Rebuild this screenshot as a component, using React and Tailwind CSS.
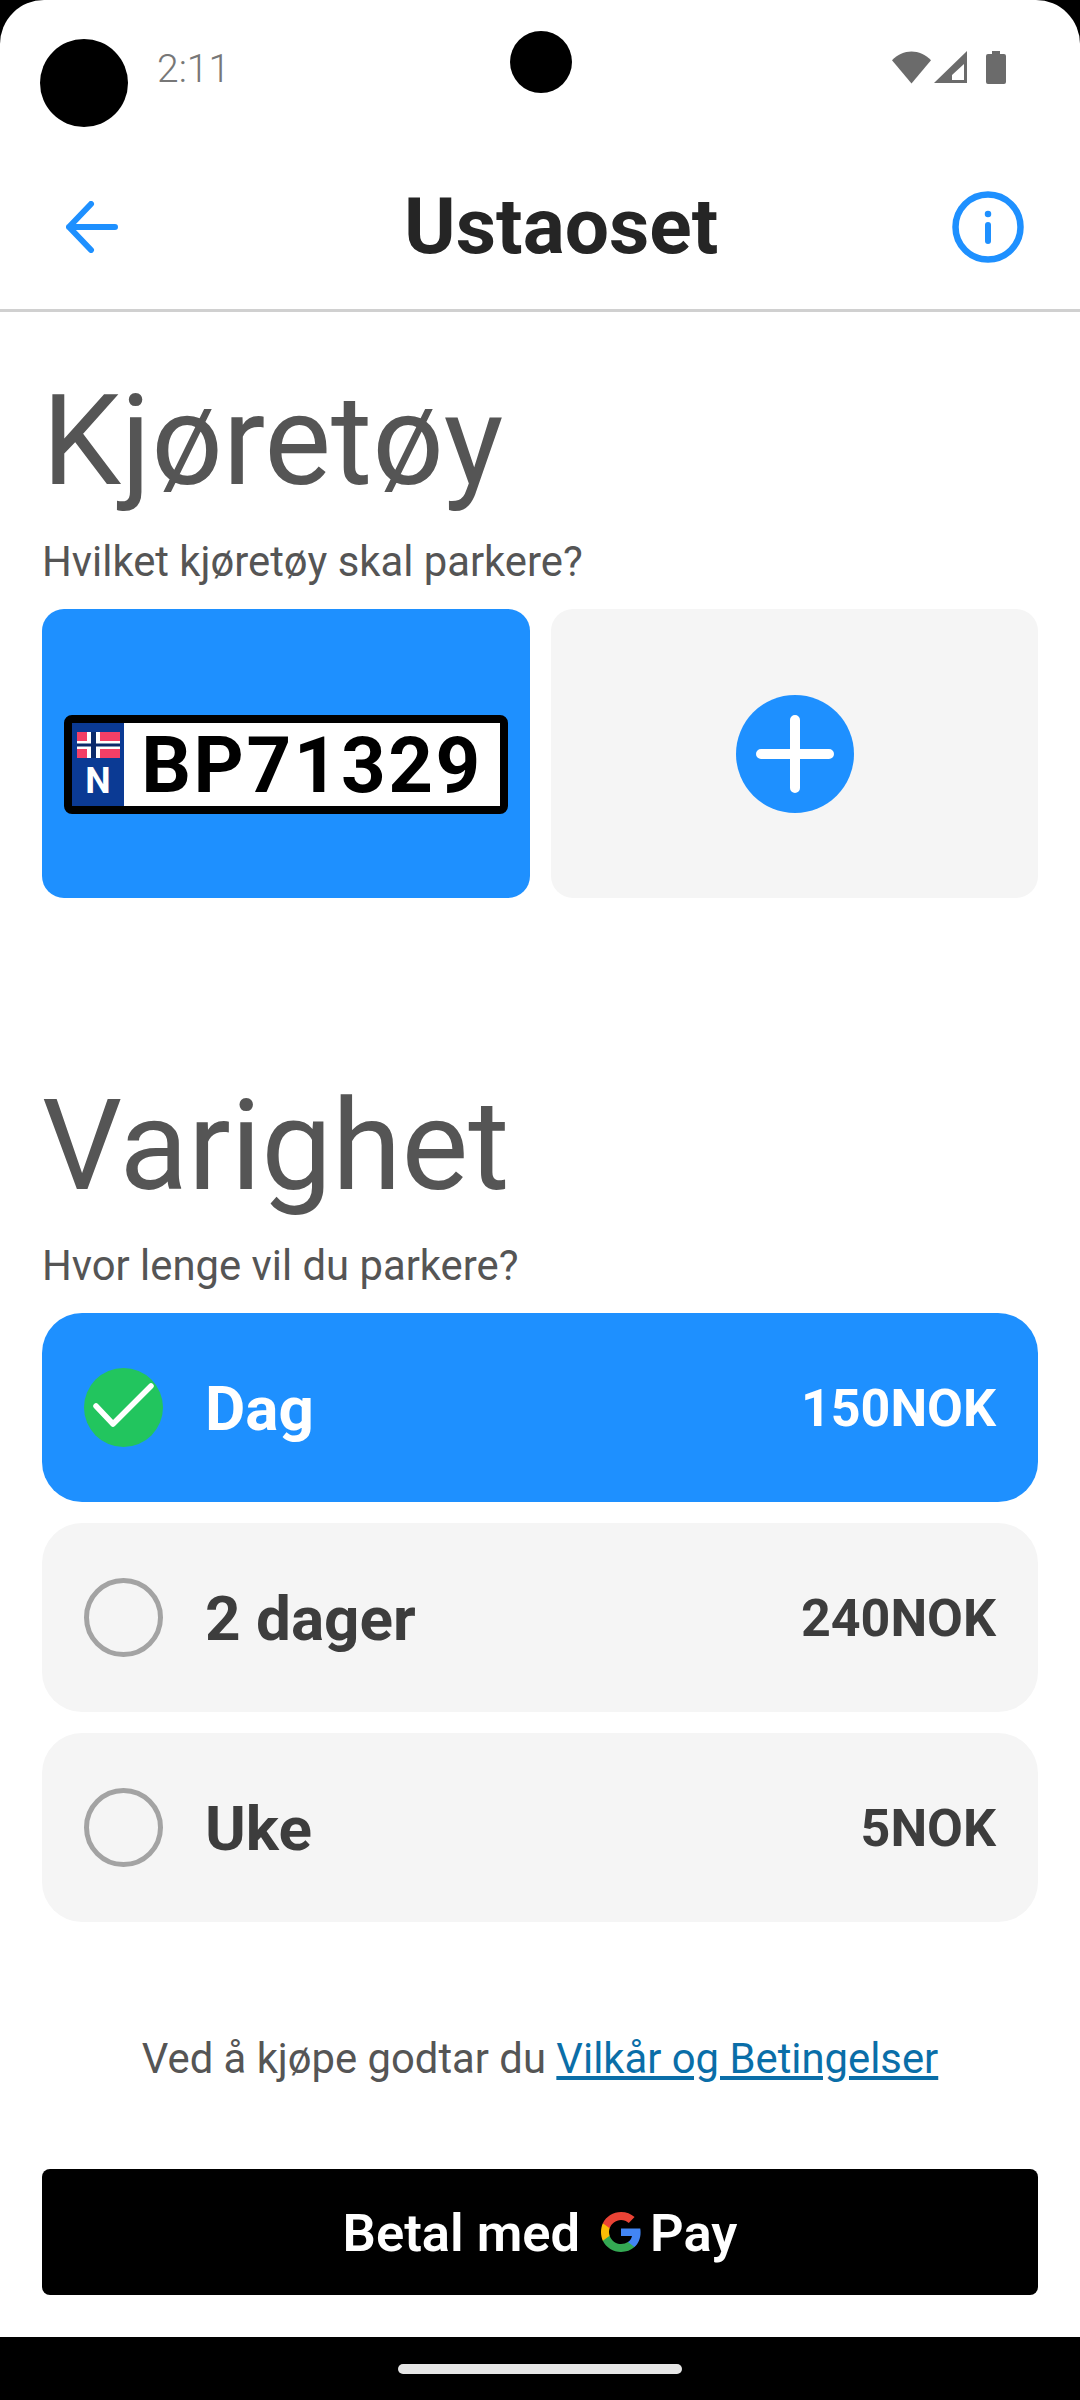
import React from "react";

const Check = () => (
  <div className="w-[79px] h-[79px] rounded-full bg-[#22c55e] flex items-center justify-center shrink-0">
    <svg width="79" height="79" viewBox="0 0 79 79" fill="none">
      <path d="M12 38 L29 56 L67 18" stroke="#fff" strokeWidth="5.500" strokeLinecap="round" strokeLinejoin="round" />
    </svg>
  </div>
);

const DurationRow = ({ label, price, selected }) => (
  <div
    className={
      selected
        ? "h-[189px] rounded-[40px] bg-[#1e90ff] text-white flex items-center pl-[42px] pr-[42px]"
        : "h-[189px] rounded-[40px] bg-[#f5f5f5] text-[#3d3d3d] flex items-center pl-[42px] pr-[42px]"
    }
  >
    {selected ? <Check /> : <div className="w-[79px] h-[79px] rounded-full border-[5px] border-[#a3a3a3] shrink-0" />}
    <span className="ml-[42px] mt-[3px] text-[62px] font-bold leading-none">{label}</span>
    <span className="ml-auto mt-[3px] text-[52px] font-bold leading-none">{price}</span>
  </div>
);

const Plate = () => (
  <div className="w-[444px] h-[99px] bg-white border-[8px] border-black rounded-[8px] flex overflow-hidden">
    <div className="w-[52px] bg-[#0b3a94] flex flex-col items-center pt-[9px]">
      <svg width="43" height="26" viewBox="0 0 43 26">
        <rect width="43" height="26" fill="#f43f66" />
        <rect x="10" width="13" height="26" fill="#fff" />
        <rect y="9" width="43" height="8" fill="#fff" />
        <rect x="14" width="5" height="26" fill="#0b2a6b" />
        <rect y="11.500" width="43" height="3" fill="#0b2a6b" />
      </svg>
      <span className="text-white text-[36px] font-bold leading-none mt-[5px]">N</span>
    </div>
    <div className="flex-1 flex items-center justify-center pt-[4px] text-black text-[78px] font-bold leading-none tracking-[2.500px]">
      BP71329
    </div>
  </div>
);

export default function App() {
  return (
    <div className="w-[1080px] h-[2400px] bg-black font-['Roboto',sans-serif] relative overflow-hidden">
      <div className="h-[2337px] bg-white rounded-t-[44px] flex flex-col">
        {/* status bar */}
        <div className="h-[130px] shrink-0 flex items-center pl-[157px] pr-[74px] pt-[4px]">
          <span className="text-[#777] text-[39px] font-light mt-[5px]">2:11</span>
          <div className="ml-auto flex items-center">
            <svg width="39" height="33" viewBox="0 0 40 33">
              <path d="M0 9 C11 -3 29 -3 40 9 L20 33 Z" fill="#6b6b6b" />
            </svg>
            <svg className="ml-[3px]" width="33" height="33" viewBox="0 0 33 33">
              <path fillRule="evenodd" d="M0 32 L33 0 V32 Z M18 29 H30 V13 L18 24 Z" fill="#6b6b6b" />
            </svg>
            <svg className="ml-[19px]" width="20" height="33" viewBox="0 0 20 33">
              <path d="M6 0 H14 V3 H18 a2 2 0 0 1 2 2 V31 a2 2 0 0 1 -2 2 H2 a2 2 0 0 1 -2 -2 V5 a2 2 0 0 1 2 -2 H6 Z" fill="#6b6b6b" />
            </svg>
          </div>
        </div>

        {/* header */}
        <div className="h-[182px] shrink-0 border-b-[3px] border-[#d0d0d0] flex items-center pl-[66px] pr-[56px] pt-[14px]">
          <svg width="52" height="52" viewBox="0 0 52 52" fill="none" stroke="#1e90ff" strokeWidth="6" strokeLinecap="round" strokeLinejoin="round">
            <path d="M49 26 H3 M25 3 L3 26 L25 49" />
          </svg>
          <h1 className="ml-[286px] text-[78.500px] font-bold text-[#252525] leading-none">Ustaoset</h1>
          <svg className="ml-auto" width="72" height="72" viewBox="0 0 72 72" fill="none" stroke="#1e90ff" strokeWidth="6.500" strokeLinecap="round">
            <circle cx="36" cy="36" r="32.500" />
            <path d="M36 34 V50" strokeWidth="6" />
            <circle cx="36" cy="23" r="1.500" fill="#1e90ff" strokeWidth="3.500" />
          </svg>
        </div>

        <div className="flex-1 px-[42px] flex flex-col">
          {/* vehicle */}
          <h2 className="mt-[59px] text-[126px] font-normal text-[#555] leading-[140px]">Kjøretøy</h2>
          <p className="mt-[27px] text-[41.800px] text-[#555] leading-[47px]">Hvilket kjøretøy skal parkere?</p>
          <div className="mt-[24px] flex gap-[21px]">
            <div className="w-[488px] h-[289px] rounded-[22px] bg-[#1e90ff] flex items-center justify-center pt-[21px]">
              <Plate />
            </div>
            <div className="w-[487px] h-[289px] rounded-[22px] bg-[#f5f5f5] flex items-center justify-center">
              <div className="w-[118px] h-[118px] rounded-full bg-[#1e90ff] flex items-center justify-center">
                <svg width="78" height="78" viewBox="0 0 78 78" stroke="#fff" strokeWidth="10" strokeLinecap="round">
                  <path d="M39 5 V73 M5 39 H73" />
                </svg>
              </div>
            </div>
          </div>

          {/* duration */}
          <h2 className="mt-[178px] text-[126px] font-normal text-[#555] leading-[140px]">Varighet</h2>
          <p className="mt-[26px] text-[41.800px] text-[#555] leading-[47px]">Hvor lenge vil du parkere?</p>
          <div className="mt-[24px] flex flex-col gap-[21px]">
            <DurationRow label="Dag" price="150NOK" selected />
            <DurationRow label="2 dager" price="240NOK" />
            <DurationRow label="Uke" price="5NOK" />
          </div>

          <p className="mt-[113px] text-center text-[41.800px] text-[#555] leading-[47px]">
            Ved å kjøpe godtar du <span className="text-[#0a6ea8] underline">Vilkår og Betingelser</span>
          </p>

          {/* pay */}
          <div className="mt-[87px] h-[126px] rounded-[8px] bg-black text-white flex items-center justify-center pt-[3px] text-[52.500px] font-semibold leading-none">
            <span>Betal med</span>
            <svg className="ml-[21px] mr-[9px] -mt-[3px]" width="40" height="40" viewBox="0 0 48 48">
              <path fill="#4285F4" d="M47.5 24.500c0-1.600-.1-3.200-.4-4.700H24v9h13.200c-.6 3-2.300 5.600-4.900 7.300v6h7.900c4.600-4.300 7.300-10.500 7.300-17.600z" />
              <path fill="#34A853" d="M24 48c6.500 0 12-2.100 16.200-5.900l-7.900-6c-2.200 1.500-5 2.300-8.300 2.300-6.300 0-11.700-4.300-13.600-10H2.200v6.200C6.300 42.800 14.600 48 24 48z" />
              <path fill="#FBBC05" d="M10.400 28.400c-.5-1.500-.8-3-.8-4.400s.3-3 .8-4.400v-6.200H2.200C.8 16.700 0 20.200 0 24s.8 7.300 2.200 10.600z" />
              <path fill="#EA4335" d="M24 9.500c3.600 0 6.800 1.200 9.300 3.600l7-7C36 2.200 30.500 0 24 0 14.600 0 6.300 5.200 2.200 13.400l8.200 6.200c1.900-5.700 7.300-10.100 13.600-10.100z" />
            </svg>
            <span>Pay</span>
          </div>
        </div>
      </div>

      {/* camera cutouts */}
      <div className="absolute left-[40px] top-[39px] w-[88px] h-[88px] rounded-full bg-black" />
      <div className="absolute left-[510px] top-[31px] w-[62px] h-[62px] rounded-full bg-black" />

      {/* gesture bar */}
      <div className="h-[63px] flex items-center justify-center">
        <div className="w-[284px] h-[10px] rounded-full bg-[#e6e6e6]" />
      </div>
    </div>
  );
}
